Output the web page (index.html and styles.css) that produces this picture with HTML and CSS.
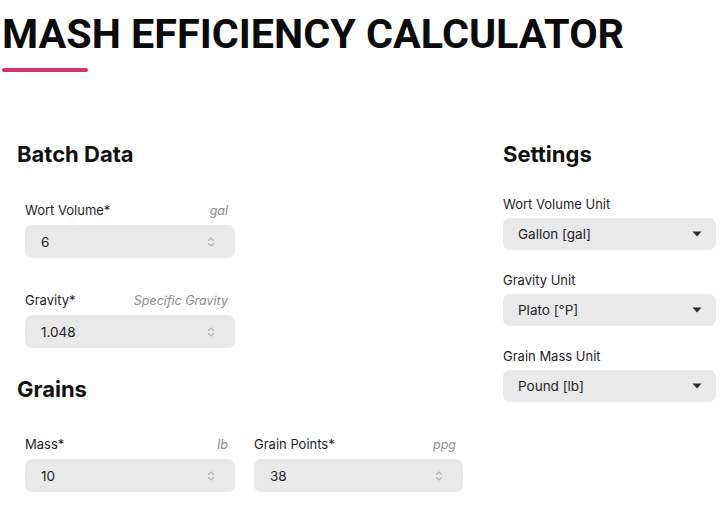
FILE: index.html
```html
<!DOCTYPE html>
<html lang="en">
<head>
<meta charset="utf-8">
<title>Mash Efficiency Calculator</title>
<link rel="stylesheet" href="styles.css">
</head>
<body>
<header class="header">
  <h1 class="title">MASH EFFICIENCY CALCULATOR</h1>
  <div class="accent"></div>
</header>
<main class="layout">
  <div class="col-left">
    <section class="section">
      <h2 class="heading">Batch Data</h2>
      <div class="fields single">
        <div class="field">
          <div class="label-row"><span class="label">Wort Volume*</span><span class="unit">gal</span></div>
          <div class="input"><span class="value">6</span><span class="spin"><svg width="8" height="12" viewBox="0 0 8 12"><path d="M1.5 4.5 L4 2 L6.5 4.5 M1.5 7.5 L4 10 L6.5 7.5" fill="none" stroke="#b0b0b5" stroke-width="1.1" stroke-linecap="round" stroke-linejoin="round"/></svg></span></div>
        </div>
        <div class="field">
          <div class="label-row"><span class="label">Gravity*</span><span class="unit">Specific Gravity</span></div>
          <div class="input"><span class="value">1.048</span><span class="spin"><svg width="8" height="12" viewBox="0 0 8 12"><path d="M1.5 4.5 L4 2 L6.5 4.5 M1.5 7.5 L4 10 L6.5 7.5" fill="none" stroke="#b0b0b5" stroke-width="1.1" stroke-linecap="round" stroke-linejoin="round"/></svg></span></div>
        </div>
      </div>
    </section>
    <section class="section">
      <h2 class="heading">Grains</h2>
      <div class="fields double">
        <div class="field">
          <div class="label-row"><span class="label">Mass*</span><span class="unit">lb</span></div>
          <div class="input"><span class="value">10</span><span class="spin"><svg width="8" height="12" viewBox="0 0 8 12"><path d="M1.5 4.5 L4 2 L6.5 4.5 M1.5 7.5 L4 10 L6.5 7.5" fill="none" stroke="#b0b0b5" stroke-width="1.1" stroke-linecap="round" stroke-linejoin="round"/></svg></span></div>
        </div>
        <div class="field">
          <div class="label-row"><span class="label">Grain Points*</span><span class="unit">ppg</span></div>
          <div class="input"><span class="value">38</span><span class="spin"><svg width="8" height="12" viewBox="0 0 8 12"><path d="M1.5 4.5 L4 2 L6.5 4.5 M1.5 7.5 L4 10 L6.5 7.5" fill="none" stroke="#b0b0b5" stroke-width="1.1" stroke-linecap="round" stroke-linejoin="round"/></svg></span></div>
        </div>
      </div>
    </section>
  </div>
  <aside class="col-right">
    <h2 class="heading">Settings</h2>
    <div class="settings">
      <div class="setting">
        <div class="slabel">Wort Volume Unit</div>
        <div class="select"><span class="value">Gallon [gal]</span><svg width="10" height="6" viewBox="0 0 10 6"><path d="M0.5 0.5 H9.5 L5 5.5 Z" fill="#2a2a2a"/></svg></div>
      </div>
      <div class="setting">
        <div class="slabel">Gravity Unit</div>
        <div class="select"><span class="value">Plato [°P]</span><svg width="10" height="6" viewBox="0 0 10 6"><path d="M0.5 0.5 H9.5 L5 5.5 Z" fill="#2a2a2a"/></svg></div>
      </div>
      <div class="setting">
        <div class="slabel">Grain Mass Unit</div>
        <div class="select"><span class="value">Pound [lb]</span><svg width="10" height="6" viewBox="0 0 10 6"><path d="M0.5 0.5 H9.5 L5 5.5 Z" fill="#2a2a2a"/></svg></div>
      </div>
    </div>
  </aside>
</main>
</body>
</html>
```
FILE: styles.css
```css
* { box-sizing: border-box; }
html, body { margin: 0; padding: 0; background: #ffffff; }
body {
  font-family: Inter, "Liberation Sans", sans-serif;
  color: #1d1d1f;
  width: 724px;
  height: 520px;
  overflow: hidden;
}
.header { padding: 0 0 0 2px; }
.title {
  font-family: Roboto, "Liberation Sans", sans-serif;
  font-weight: 700;
  font-size: 41.3px;
  line-height: 48px;
  margin: 10px 0 0 0;
  color: #0b0b0b;
}
.accent {
  width: 86px;
  height: 4px;
  background: #cf3370;
  border-radius: 2px;
  margin-top: 10px;
}
.layout {
  display: flex;
  margin-top: 68px;
  padding-left: 17px;
}
.col-left { width: 486px; }
.col-right { width: 213px; }
.heading {
  font-family: Inter, "Liberation Sans", sans-serif;
  font-weight: 700;
  font-size: 22px;
  line-height: 28px;
  margin: 0;
  color: #111;
}
.fields {
  padding-left: 8px;
  margin-top: 32px;
  display: grid;
  gap: 32px 19px;
}
.fields.single { grid-template-columns: 210px; }
.fields.double { grid-template-columns: 210px 209px; margin-top: 31px; }
.section + .section { margin-top: 27px; }
.label-row {
  display: flex;
  justify-content: space-between;
  align-items: baseline;
  font-size: 13px;
  line-height: 20px;
  margin-bottom: 4px;
}
.label { color: #1d1d1f; }
.unit { color: #8a8a8e; font-style: italic; font-size: 12.5px; padding-right: 7px; }
.input, .select {
  height: 33px;
  background: #e9e9ea;
  border-radius: 7px;
  display: flex;
  align-items: center;
  justify-content: space-between;
  padding: 0 20px 0 16px;
  font-size: 13.5px;
  color: #1d1d1f;
}
.spin { display: flex; }
.settings {
  margin-top: 26px;
  display: flex;
  flex-direction: column;
  gap: 20px;
}
.slabel {
  font-size: 13px;
  line-height: 20px;
  margin-bottom: 4px;
}
.select {
  height: 32px;
  padding: 0 14px 0 15px;
}
```
